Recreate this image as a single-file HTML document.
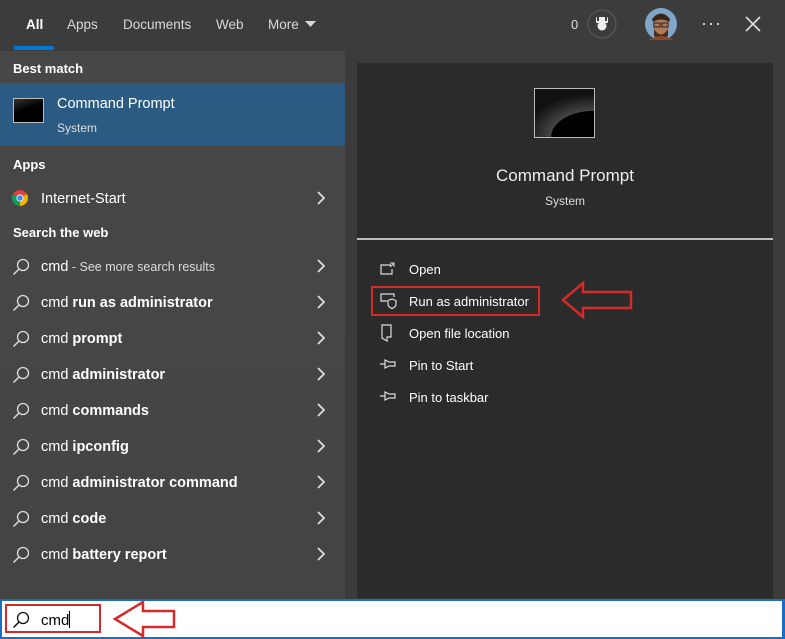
<!DOCTYPE html>
<html><head><meta charset="utf-8"><style>
*{margin:0;padding:0;box-sizing:border-box}
body{width:785px;height:639px;overflow:hidden;background:#3b3b3b;font-family:"Liberation Sans",sans-serif;color:#fff;position:relative}
.abs{position:absolute}
.top{left:0;top:0;width:785px;height:51px;background:#3c3c3c}
.tab{top:17px;font-size:13.5px;color:#d8d8d8}
.left{left:0;top:51px;width:345px;height:548px;background:linear-gradient(#474747,#444)}
.hdr{left:13px;font-size:13px;font-weight:bold;color:#fff}
.row{left:0;width:345px;height:36px;font-size:14.5px;color:#fff}
.row .t{position:absolute;left:41px;top:11px}
.row .chev{position:absolute;left:314px;top:9px;width:14px;height:18px}
.row .mg{position:absolute;left:12px;top:10px}
.card{left:357px;top:63px;width:416px;height:535px;background:#2b2b2b}
.act{left:409px;font-size:13px;color:#fff}
.ico{left:380px}
</style></head><body>
<div class="abs top"></div>
<div class="abs tab" style="left:26px;color:#fff;font-weight:bold">All</div>
<div class="abs" style="left:14px;top:46px;width:40px;height:4px;background:#0078d4"></div>
<div class="abs tab" style="left:67px">Apps</div>
<div class="abs tab" style="left:123px">Documents</div>
<div class="abs tab" style="left:216px">Web</div>
<div class="abs tab" style="left:268px">More</div>
<svg class="abs" style="left:305px;top:21px" width="11" height="7"><path d="M0 0H11L5.5 6Z" fill="#d8d8d8"/></svg>
<div class="abs" style="left:571px;top:17px;font-size:13px;color:#ddd">0</div>
<svg class="abs" style="left:587px;top:9px" width="30" height="30"><circle cx="15" cy="15" r="14" fill="none" stroke="#555" stroke-width="1.5"/><rect x="9" y="8" width="12" height="6" rx="1" fill="#eee"/><circle cx="15" cy="17" r="4.5" fill="#eee"/><rect x="10" y="8" width="2" height="4" fill="#3c3c3c"/><rect x="18" y="8" width="2" height="4" fill="#3c3c3c"/></svg>
<svg class="abs" style="left:645px;top:8px" width="32" height="32"><circle cx="16" cy="16" r="16" fill="#7fa6c8"/><ellipse cx="16" cy="17" rx="8" ry="10" fill="#b07a5a"/><path d="M7 11Q16 0 25 11L24 14Q16 9 8 14Z" fill="#3a2418"/><path d="M9 21Q16 32 23 21L23 28Q16 33 9 28Z" fill="#4a2c1c"/><path d="M4 32Q16 24 28 32Z" fill="#8a4a28"/><rect x="9" y="15" width="6" height="4" fill="none" stroke="#222"/><rect x="17" y="15" width="6" height="4" fill="none" stroke="#222"/></svg>
<svg class="abs" style="left:702px;top:22px" width="18" height="4"><circle cx="2" cy="2" r="1.1" fill="#ddd"/><circle cx="9" cy="2" r="1.1" fill="#ddd"/><circle cx="16" cy="2" r="1.1" fill="#ddd"/></svg>
<svg class="abs" style="left:745px;top:16px" width="16" height="16"><path d="M1 1L15 15M15 1L1 15" stroke="#ddd" stroke-width="1.6"/></svg>

<div class="abs left"></div>
<div class="abs hdr" style="top:61px">Best match</div>
<div class="abs" style="left:0;top:83px;width:345px;height:63px;background:#2b5b83"></div>
<div class="abs" style="left:13px;top:98px;width:31px;height:25px;background:linear-gradient(160deg,#333 0%,#000 45%);border:1px solid #bbb"></div>
<div class="abs" style="left:57px;top:96px;font-size:14.5px">Command Prompt</div>
<div class="abs" style="left:57px;top:121px;font-size:12px;color:#ddd">System</div>
<div class="abs hdr" style="top:157px">Apps</div>
<div class="abs row" style="top:180px">
<svg class="mg" style="top:10px" width="16" height="16"><circle cx="8" cy="8" r="8" fill="#db4437"/><path d="M8 8L1.1 4A8 8 0 0 0 8 16Z" fill="#0f9d58"/><path d="M8 8L8 16A8 8 0 0 0 14.9 4Z" fill="#f4b400"/><circle cx="8" cy="8" r="3.6" fill="#fff"/><circle cx="8" cy="8" r="2.8" fill="#4285f4"/></svg>
<span class="t">Internet-Start</span><svg class="chev" viewBox="0 0 14 18"><path d="M4 3L10 9L4 15" stroke="#ddd" stroke-width="1.8" fill="none"/></svg></div>
<div class="abs hdr" style="top:225px">Search the web</div>
<div id="rows"></div>

<div class="abs card"></div>
<div class="abs" style="left:534px;top:88px;width:61px;height:50px;border:1px solid #bbb;background:radial-gradient(ellipse 120% 90% at 100% 100%,#000 60%,#444 61%,#111 100%)"></div>
<div class="abs" style="left:357px;top:166px;width:416px;text-align:center;font-size:17px;color:#eee">Command Prompt</div>
<div class="abs" style="left:357px;top:194px;width:416px;text-align:center;font-size:12px;color:#ddd">System</div>
<div class="abs" style="left:357px;top:238px;width:416px;height:2px;background:#bdbdbd"></div>

<svg class="abs ico" style="top:262px" width="16" height="14"><path d="M11 3H1V12H12V7" stroke="#ddd" fill="none" stroke-width="1.2"/><path d="M10 1H14V5M14 1L10 5" stroke="#ddd" fill="none" stroke-width="1"/></svg>
<div class="abs act" style="top:262px">Open</div>
<div class="abs" style="left:371px;top:286px;width:169px;height:30px;border:2px solid #d42a2a"></div>
<svg class="abs ico" style="top:293px" width="18" height="16"><path d="M1 5V1H14V4M1 5V8H7" stroke="#ddd" fill="none" stroke-width="1.2"/><path d="M12 6L16 7.5V11Q16 14 12 15.5Q8 14 8 11V7.5Z" stroke="#ddd" fill="none" stroke-width="1.2"/></svg>
<div class="abs act" style="top:294px">Run as administrator</div>
<svg class="abs" style="left:560px;top:280px" width="74" height="40"><path d="M3 20L23 3V12H71V28H23V37Z" fill="none" stroke="#d42a2a" stroke-width="2.5" stroke-linejoin="miter"/></svg>
<svg class="abs ico" style="top:324px" width="14" height="18"><path d="M2 1H11V13H7V17L2 14Z" stroke="#ddd" fill="none" stroke-width="1.2"/></svg>
<div class="abs act" style="top:326px">Open file location</div>
<svg class="abs ico" style="top:358px" width="18" height="12"><path d="M0 6H5M5 2V10L9 8H15V4H9Z" stroke="#ddd" fill="none" stroke-width="1.2"/></svg>
<div class="abs act" style="top:358px">Pin to Start</div>
<svg class="abs ico" style="top:390px" width="18" height="12"><path d="M0 6H5M5 2V10L9 8H15V4H9Z" stroke="#ddd" fill="none" stroke-width="1.2"/></svg>
<div class="abs act" style="top:390px">Pin to taskbar</div>

<div class="abs" style="left:0;top:599px;width:785px;height:40px;background:#fff;border:2px solid #1a6fc4;border-right-width:3px"></div>
<svg class="abs" style="left:12px;top:611px" width="18" height="18"><circle cx="11" cy="7" r="5.5" stroke="#111" stroke-width="1.3" fill="none"/><path d="M7 11L1.5 16.5" stroke="#111" stroke-width="1.5"/></svg>
<div class="abs" style="left:41px;top:611px;font-size:15px;color:#000">cmd<span style="display:inline-block;width:1px;height:17px;background:#000;vertical-align:-3px"></span></div>
<div class="abs" style="left:5px;top:604px;width:96px;height:29px;border:2px solid #d42a2a"></div>
<svg class="abs" style="left:112px;top:600px" width="66" height="38"><path d="M3 19L31 2V11H62V27H31V36Z" fill="none" stroke="#d42a2a" stroke-width="2.5"/></svg>

<script>
var items=[["cmd",'<span style="font-size:12.5px;color:#ddd"> - See more search results</span>'],["cmd","run as administrator"],["cmd","prompt"],["cmd","administrator"],["cmd","commands"],["cmd","ipconfig"],["cmd","administrator command"],["cmd","code"],["cmd","battery report"]];
var h="";items.forEach(function(it,i){var y=248+i*36;var rest=it[1].indexOf("<")==0?it[1]:' <b>'+it[1]+'</b>';
h+='<div class="abs row" style="top:'+y+'px"><svg class="mg" width="18" height="18"><circle cx="11" cy="7" r="5.5" stroke="#ddd" stroke-width="1.3" fill="none"/><path d="M7 11L1.5 16.5" stroke="#ddd" stroke-width="1.5"/></svg><span class="t">cmd'+rest+'</span><svg class="chev" viewBox="0 0 14 18"><path d="M4 3L10 9L4 15" stroke="#ddd" stroke-width="1.8" fill="none"/></svg></div>';});
document.getElementById("rows").outerHTML=h;
</script>
</body></html>
